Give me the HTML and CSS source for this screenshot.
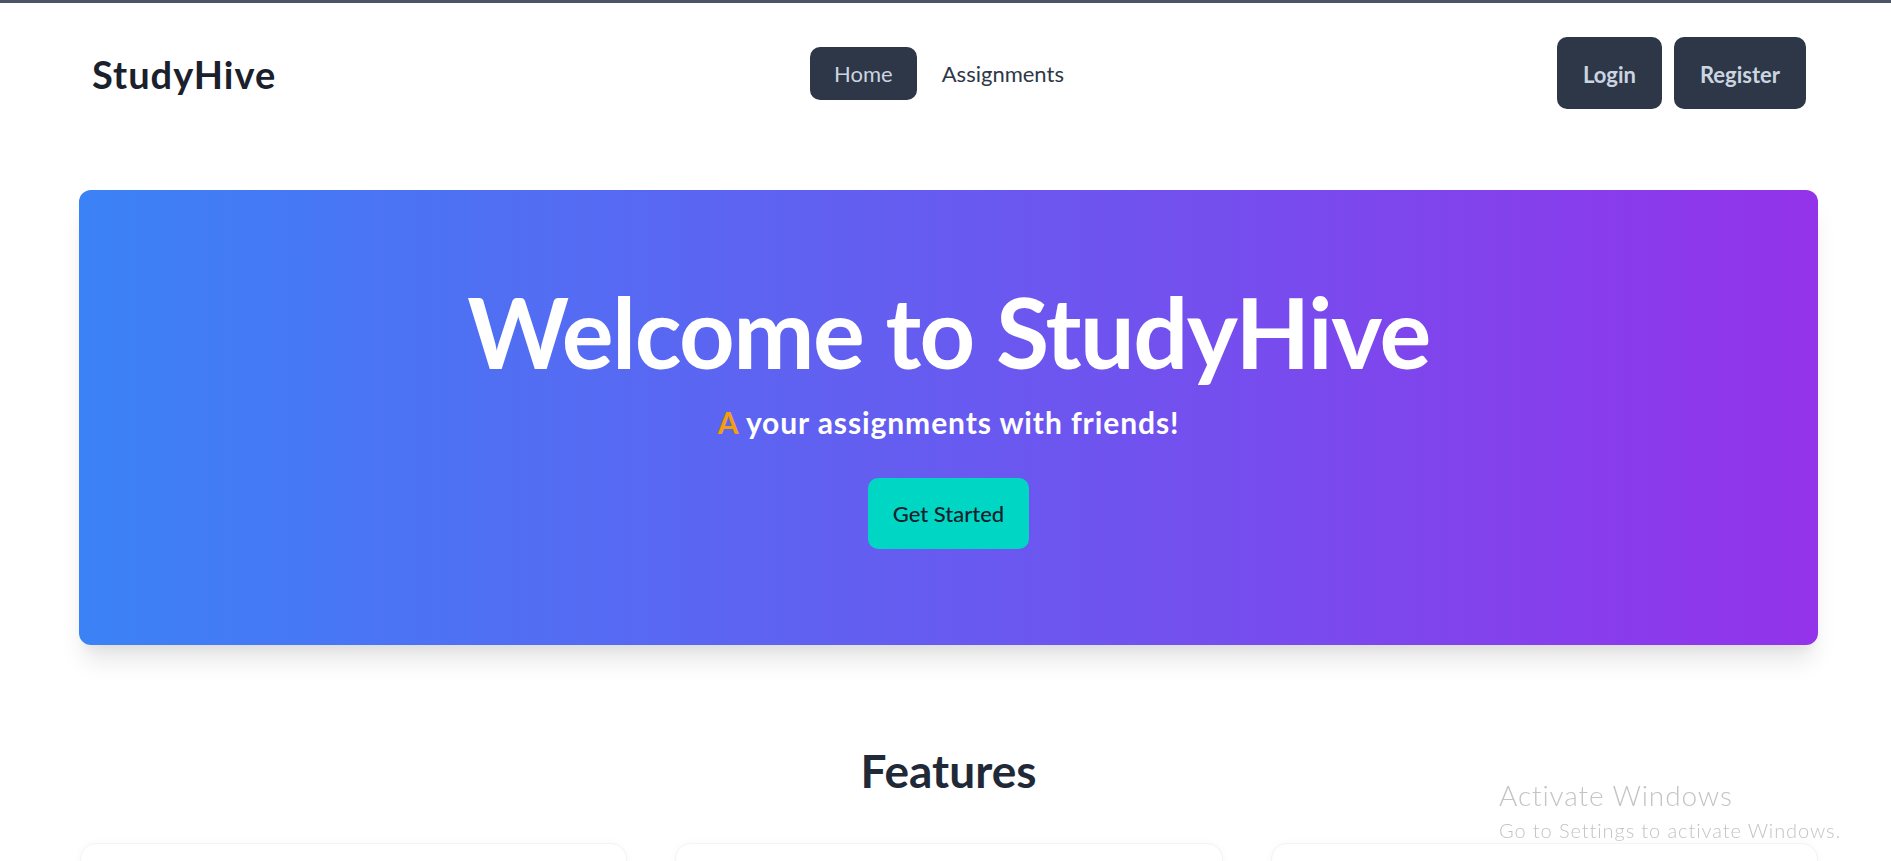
FILE: index.html
```html
<!DOCTYPE html>
<html lang="en">
<head>
<meta charset="utf-8">
<title>StudyHive</title>
<link rel="stylesheet" href="styles.css">
</head>
<body>
<div class="topbar"></div>
<header class="nav">
  <div class="logo">StudyHive</div>
  <nav class="links">
    <a class="link active" href="#">Home</a>
    <a class="link" href="#">Assignments</a>
  </nav>
  <div class="auth">
    <a class="btn" href="#">Login</a>
    <a class="btn" href="#">Register</a>
  </div>
</header>
<main class="main">
  <section class="hero">
    <h1 class="hero-title">Welcome to StudyHive</h1>
    <p class="hero-sub"><span class="accent">A</span> your assignments with friends!</p>
    <a class="cta" href="#">Get Started</a>
  </section>
  <section class="features">
    <h2 class="features-title">Features</h2>
    <div class="cards">
      <div class="card"></div>
      <div class="card"></div>
      <div class="card"></div>
    </div>
  </section>
</main>
<div class="watermark">
  <div class="wm-title">Activate Windows</div>
  <div class="wm-sub">Go to Settings to activate Windows.</div>
</div>
</body>
</html>
```
FILE: styles.css
```css
* { box-sizing: border-box; }
html, body { margin: 0; padding: 0; }
body {
  font-family: Lato, "Open Sans", "Noto Sans", sans-serif;
  color: #1a202c;
  background: #ffffff;
  overflow: hidden;
}
.topbar { height: 3px; background: #4b5563; }
.nav {
  height: 140px;
  padding: 0 85px 0 92px;
  display: grid;
  grid-template-columns: 1fr auto 1fr;
  align-items: center;
}
.logo {
  font-size: 38px;
  font-weight: 700;
  letter-spacing: 1px;
  line-height: 1.2;
  color: #1a202c;
  padding-top: 3px;
}
.links { display: flex; align-items: center; gap: 1px; }
.link {
  display: block;
  font-size: 22px;
  line-height: 53px;
  height: 53px;
  padding: 0 24px;
  border-radius: 10px;
  color: #2d3748;
  text-decoration: none;
}
.link.active { background: #2d3748; color: #cbd5e0; }
.auth { display: flex; justify-content: flex-end; gap: 12px; }
.btn {
  display: block;
  height: 72px;
  line-height: 72px;
  padding: 2px 26px 0;
  border-radius: 10px;
  background: #2d3748;
  color: #cbd5e0;
  font-size: 22px;
  font-weight: 700;
  text-decoration: none;
}
.main { padding: 47px 73px 0 79px; }
.hero {
  height: 455px;
  padding-top: 92px;
  border-radius: 12px;
  background: linear-gradient(to right, #3b82f6, #9333ea);
  box-shadow: 0 20px 25px -5px rgba(0,0,0,0.1), 0 10px 10px -5px rgba(0,0,0,0.04);
  display: flex;
  flex-direction: column;
  align-items: center;
}
.hero-title {
  margin: 0;
  font-size: 97px;
  letter-spacing: -1.5px;
  line-height: 100px;
  font-weight: 700;
  color: #ffffff;
}
.hero-sub {
  margin: 20px 0 0;
  font-size: 30px;
  letter-spacing: 0.9px;
  line-height: 40px;
  font-weight: 700;
  color: #ffffff;
}
.accent { color: #f59e0b; }
.cta {
  margin-top: 36px;
  height: 71px;
  line-height: 71px;
  padding: 0 25px;
  border-radius: 10px;
  background: #00d6c4;
  color: #1a202c;
  font-size: 22px;
  font-weight: 500;
  text-decoration: none;
}
.features { padding-top: 98px; }
.features-title {
  margin: 0;
  text-align: center;
  font-size: 46px;
  line-height: 1.2;
  font-weight: 700;
  color: #1f2937;
}
.cards {
  margin-top: 45px;
  display: grid;
  grid-template-columns: repeat(3, 1fr);
  gap: 48px;
  padding-left: 1px;
}
.card {
  height: 220px;
  border-radius: 16px;
  border: 1px solid #f3f4f6;
  box-shadow: 0 0 8px rgba(0,0,0,0.03);
  background: #ffffff;
}
.watermark {
  position: fixed;
  left: 1499px;
  top: 779px;
  color: #c4c4c4;
  font-weight: 300;
  letter-spacing: 0.9px;
}
.wm-title { font-size: 28px; line-height: 32px; }
.wm-sub { margin-top: 5px; font-size: 20px; line-height: 28px; }
```
